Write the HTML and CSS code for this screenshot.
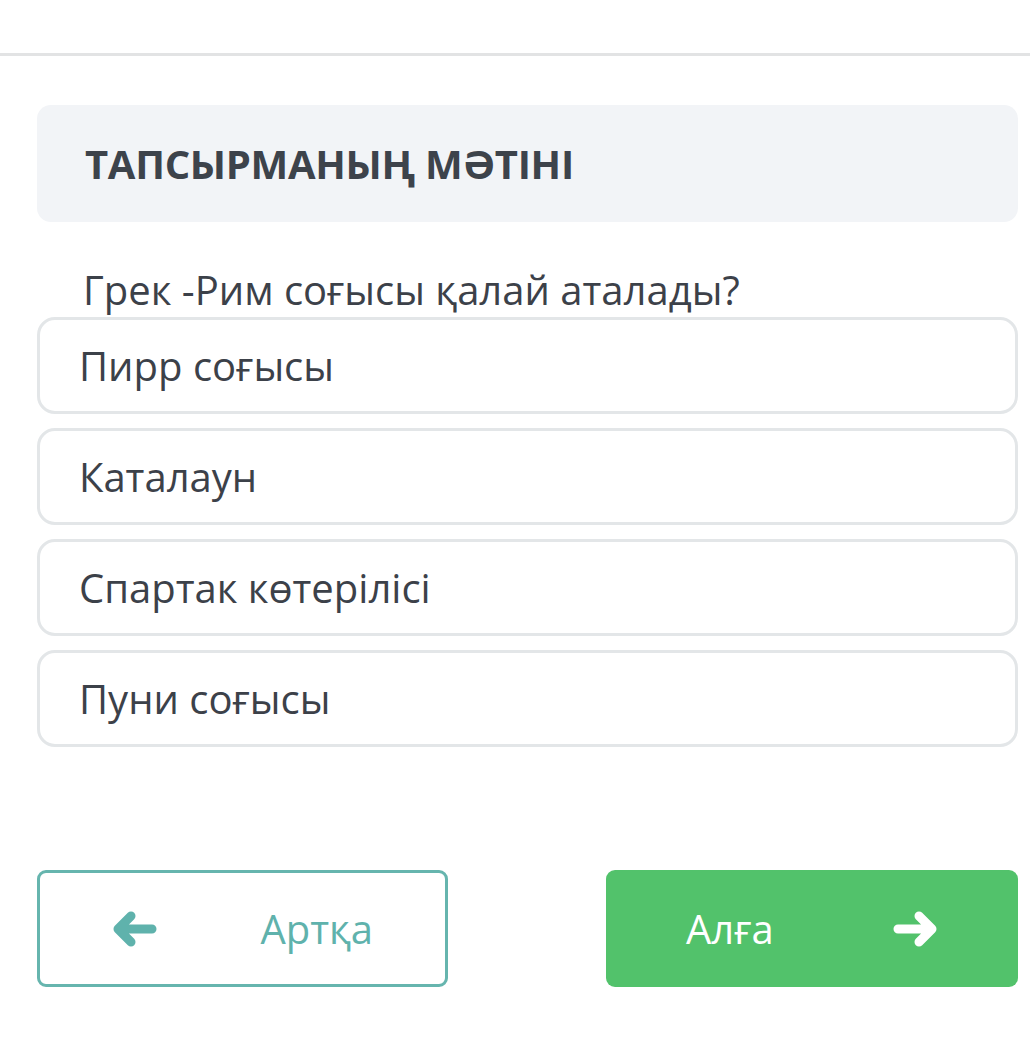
FILE: index.html
```html
<!DOCTYPE html>
<html lang="kk">
<head>
<meta charset="utf-8">
<title>Тапсырма</title>
<link rel="stylesheet" href="styles.css">
</head>
<body>
<div class="topbar"></div>
<main class="content">
  <div class="task-head">
    <h1 class="task-title">ТАПСЫРМАНЫҢ МӘТІНІ</h1>
  </div>
  <p class="question">Грек -Рим соғысы қалай аталады?</p>
  <ul class="options">
    <li class="option">Пирр соғысы</li>
    <li class="option">Каталаун</li>
    <li class="option">Спартак көтерілісі</li>
    <li class="option">Пуни соғысы</li>
  </ul>
  <div class="nav">
    <button class="btn btn-back">
      <svg class="arrow" width="44" height="40" viewBox="0 0 44 40"><path d="M39 20H6M18 7L5 20L18 33" fill="none" stroke="currentColor" stroke-width="9" stroke-linecap="round" stroke-linejoin="round"/></svg>
      <span>Артқа</span>
    </button>
    <button class="btn btn-next">
      <span>Алға</span>
      <svg class="arrow" width="44" height="40" viewBox="0 0 44 40"><path d="M5 20H38M26 7L39 20L26 33" fill="none" stroke="currentColor" stroke-width="9" stroke-linecap="round" stroke-linejoin="round"/></svg>
    </button>
  </div>
</main>
</body>
</html>
```
FILE: styles.css
```css
* { box-sizing: border-box; }
html, body { margin: 0; padding: 0; background: #fff; }
body {
  font-family: "Open Sans", "Noto Sans", sans-serif;
  color: #3c4149;
}
.topbar {
  height: 56px;
  border-bottom: 3px solid #e2e3e4;
}
.content {
  padding: 49px 12px 0 37px;
}
.task-head {
  background: #f2f4f7;
  border-radius: 14px;
  height: 117px;
  display: flex;
  align-items: center;
  padding: 0 48px;
}
.task-title {
  margin: 0;
  font-size: 40px;
  font-weight: 700;
  color: #3d434b;
  letter-spacing: -0.3px;
}
.question {
  margin: 42px 0 0 46px;
  font-size: 40px;
  line-height: 52px;
  height: 53px;
}
.options {
  list-style: none;
  margin: 0;
  padding: 0;
  display: flex;
  flex-direction: column;
  gap: 14px;
}
.option {
  height: 97px;
  border: 3px solid #e3e6e8;
  border-radius: 18px;
  display: flex;
  align-items: center;
  padding: 0 40px 0 39px;
  font-size: 40px;
  color: #3c4149;
}
.nav {
  margin-top: 123px;
  display: flex;
  justify-content: space-between;
}
.btn {
  width: 411px;
  height: 117px;
  border-radius: 9px;
  display: flex;
  align-items: center;
  justify-content: space-between;
  font-family: inherit;
  font-size: 40px;
  cursor: pointer;
}
.btn-back {
  background: #fff;
  border: 3px solid #66b5ae;
  color: #5fb2ac;
  padding: 0 72px 0 73px;
}
.btn-next {
  width: 412px;
  background: #52c26b;
  border: none;
  color: #fff;
  padding: 0 81px 0 80px;
}
.arrow { display: block; }
```
